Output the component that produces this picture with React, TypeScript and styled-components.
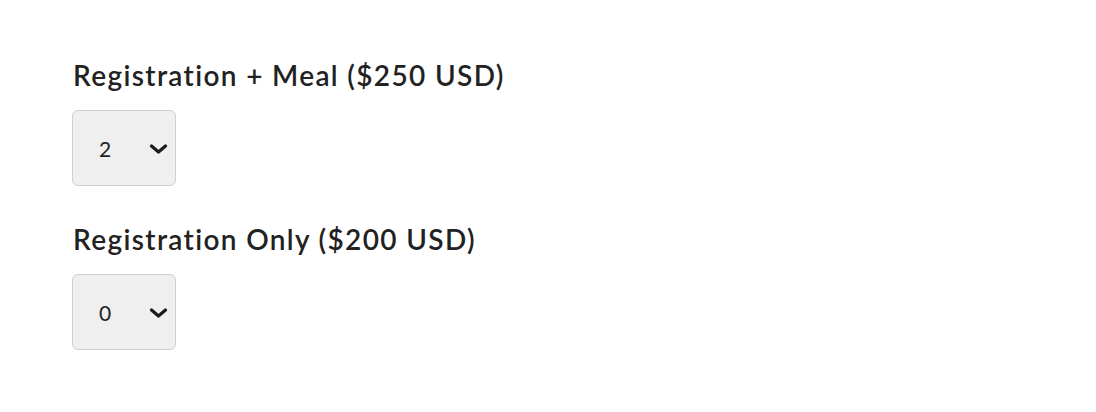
import React from "react";
import styled, { createGlobalStyle } from "styled-components";

const Global = createGlobalStyle`
  html, body { margin: 0; padding: 0; background: #ffffff; }
  body { font-family: "Lato", "Noto Sans", sans-serif; color: #222222; }
`;

const Form = styled.div`
  display: flex;
  flex-direction: column;
  padding: 58px 0 0 72px;
`;

const Field = styled.div`
  display: flex;
  flex-direction: column;
  align-items: flex-start;
  margin-bottom: 36px;
`;

const Label = styled.label`
  font-size: 28px;
  font-weight: 600;
  line-height: 34px;
  letter-spacing: 1.35px;
  color: #222222;
  margin-bottom: 18px;
  margin-left: 1px;
`;

const SelectWrap = styled.div`
  position: relative;
  width: 104px;
  height: 76px;
`;

const Select = styled.select`
  appearance: none;
  -webkit-appearance: none;
  width: 104px;
  height: 76px;
  box-sizing: border-box;
  border: 1px solid #cfcfcf;
  border-radius: 6px;
  background: #efefef;
  padding: 0 0 0 26px;
  font-family: "Lato", "Noto Sans", sans-serif;
  font-size: 21px;
  letter-spacing: 0.5px;
  color: #222222;
  cursor: pointer;
  outline: none;
`;

const Chevron = styled.svg`
  position: absolute;
  right: 8px;
  top: 34px;
  width: 19px;
  height: 10px;
  pointer-events: none;
`;

const QtySelect: React.FC<{ id: string; value: string }> = ({ id, value }) => (
  <SelectWrap>
    <Select id={id} defaultValue={value}>
      {Array.from({ length: 11 }, (_, i) => (
        <option key={i} value={String(i)}>
          {i}
        </option>
      ))}
    </Select>
    <Chevron viewBox="0 0 19 10">
      <path d="M2.5 2 L9.5 8 L16.5 2" fill="none" stroke="#1a1a1a" strokeWidth="3.2" strokeLinecap="round" strokeLinejoin="round" />
    </Chevron>
  </SelectWrap>
);

export default function App() {
  return (
    <>
      <Global />
      <Form>
        <Field>
          <Label htmlFor="meal">Registration + Meal ($250 USD)</Label>
          <QtySelect id="meal" value="2" />
        </Field>
        <Field>
          <Label htmlFor="only">Registration Only ($200 USD)</Label>
          <QtySelect id="only" value="0" />
        </Field>
      </Form>
    </>
  );
}
